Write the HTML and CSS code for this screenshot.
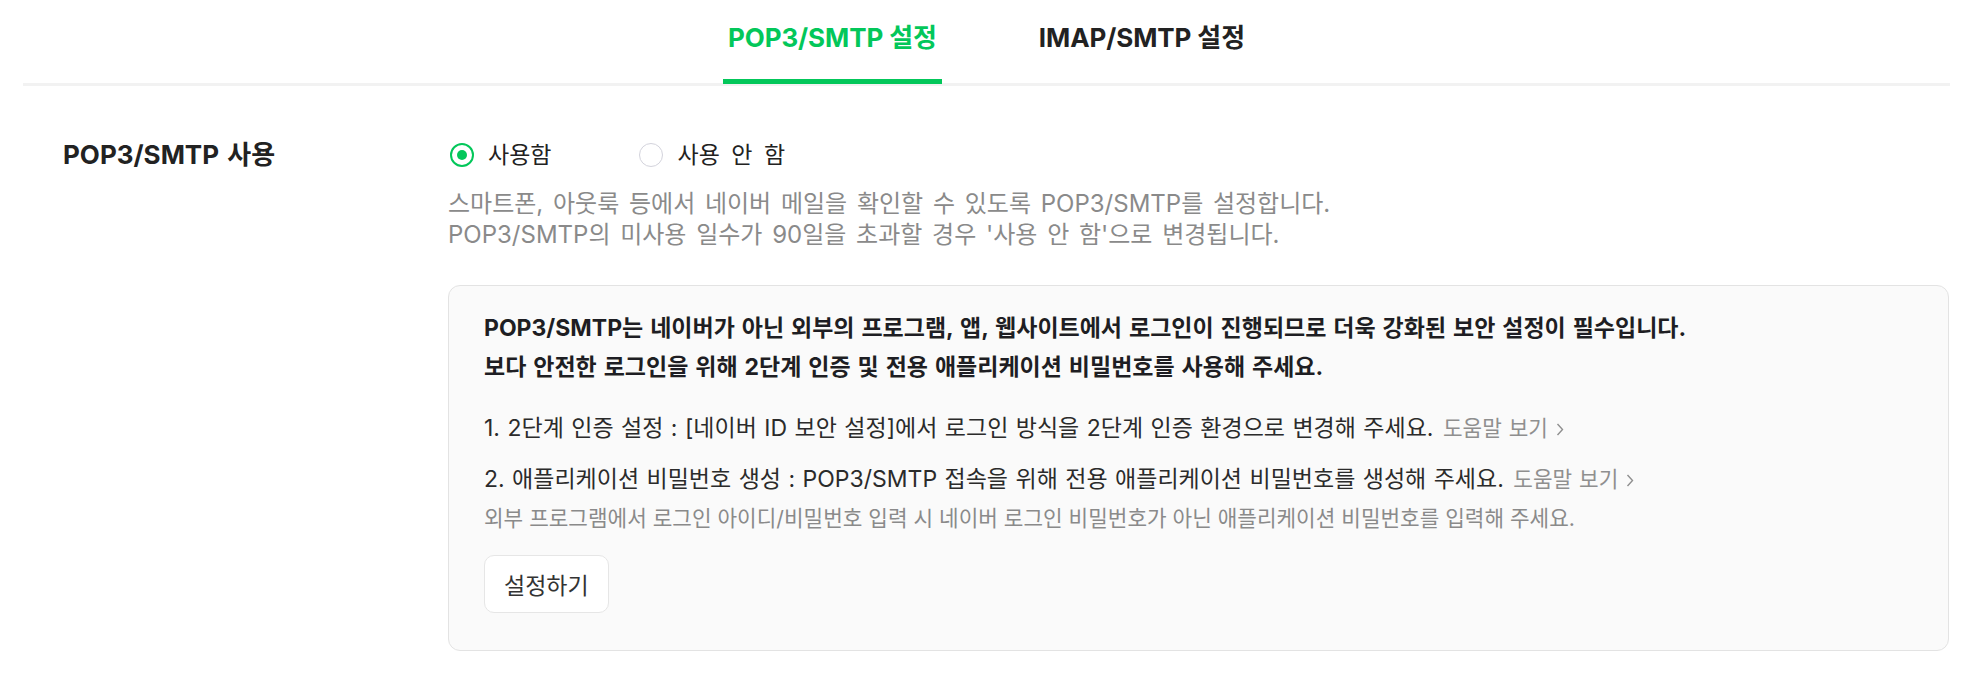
FILE: index.html
```html
<!DOCTYPE html>
<html lang="ko">
<head>
<meta charset="utf-8">
<title>POP3/SMTP 설정</title>
<link rel="stylesheet" href="styles.css">
</head>
<body>
<div class="page">
  <nav class="tabs">
    <a class="tab active">POP3/SMTP 설정</a>
    <a class="tab">IMAP/SMTP 설정</a>
  </nav>

  <section class="setting">
    <h2 class="setting-label">POP3/SMTP 사용</h2>
    <div class="setting-body">
      <div class="radios">
        <label class="radio checked"><span class="radio-dot"></span><span class="radio-text">사용함</span></label>
        <label class="radio"><span class="radio-dot"></span><span class="radio-text">사용 안 함</span></label>
      </div>
      <p class="desc">스마트폰, 아웃룩 등에서 네이버 메일을 확인할 수 있도록 POP3/SMTP를 설정합니다.<br>POP3/SMTP의 미사용 일수가 90일을 초과할 경우 '사용 안 함'으로 변경됩니다.</p>

      <div class="notice">
        <p class="notice-title">POP3/SMTP는 네이버가 아닌 외부의 프로그램, 앱, 웹사이트에서 로그인이 진행되므로 더욱 강화된 보안 설정이 필수입니다.<br>보다 안전한 로그인을 위해 2단계 인증 및 전용 애플리케이션 비밀번호를 사용해 주세요.</p>
        <ol class="steps">
          <li class="step">1. 2단계 인증 설정 : [네이버 ID 보안 설정]에서 로그인 방식을 2단계 인증 환경으로 변경해 주세요. <a class="help">도움말 보기<svg class="chev" viewBox="0 0 8 14" width="8" height="15"><polyline points="1.5,1.5 6.5,7 1.5,12.5" fill="none" stroke="#8f8f8f" stroke-width="1.4"/></svg></a></li>
          <li class="step">2. 애플리케이션 비밀번호 생성 : POP3/SMTP 접속을 위해 전용 애플리케이션 비밀번호를 생성해 주세요. <a class="help">도움말 보기<svg class="chev" viewBox="0 0 8 14" width="8" height="15"><polyline points="1.5,1.5 6.5,7 1.5,12.5" fill="none" stroke="#8f8f8f" stroke-width="1.4"/></svg></a></li>
        </ol>
        <p class="note">외부 프로그램에서 로그인 아이디/비밀번호 입력 시 네이버 로그인 비밀번호가 아닌 애플리케이션 비밀번호를 입력해 주세요.</p>
        <button class="btn" type="button">설정하기</button>
      </div>
    </div>
  </section>
</div>
</body>
</html>
```

FILE: styles.css
```css
* { box-sizing: border-box; }
html, body { margin: 0; padding: 0; background: #fff; }
body {
  font-family: "Inter", "Noto Sans CJK KR", sans-serif;
  color: #222;
}
.page {
  margin-left: 23px;
  width: 1927px;
}

/* tabs */
.tabs {
  display: flex;
  justify-content: center;
  gap: 92px;
  border-bottom: 3px solid #f2f2f2;
}
.tab {
  position: relative;
  padding: 20px 5px 27px;
  font-size: 26px;
  line-height: 36px;
  font-weight: 700;
  color: #222;
  letter-spacing: -0.1px;
}
.tab.active { color: #03c75a; }
.tab.active::after {
  content: "";
  position: absolute;
  left: 0;
  right: 0;
  bottom: -1px;
  height: 5px;
  background: #03c75a;
}

/* setting row */
.setting {
  display: grid;
  grid-template-columns: 425px 1fr;
  margin-top: 53px;
}
.setting-label {
  margin: 0;
  padding-left: 40px;
  font-size: 26px;
  line-height: 32px;
  font-weight: 700;
  color: #222;
  word-spacing: 2px;
}
.setting-body { min-width: 0; }

.radios {
  display: flex;
  align-items: center;
  gap: 86px;
  height: 32px;
}
.radio {
  display: flex;
  align-items: center;
  gap: 14px;
  font-size: 23px;
  line-height: 32px;
  color: #222;
  word-spacing: 5px;
}
.radio-dot {
  width: 24px;
  height: 24px;
  border-radius: 50%;
  border: 1.5px solid #d3d3dc;
  background: #fff;
  display: flex;
  align-items: center;
  justify-content: center;
  margin-left: 2px;
}
.radio.checked .radio-dot { border: 2px solid #03c75a; }
.radio.checked .radio-dot::before {
  content: "";
  width: 10px;
  height: 10px;
  border-radius: 50%;
  background: #03c75a;
}

.desc {
  margin: 17px 0 0;
  font-size: 24px;
  line-height: 31px;
  color: #8a8a8a;
  word-spacing: 3px;
}

/* notice box */
.notice {
  margin-top: 35px;
  width: 1501px;
  background: #fafafa;
  border: 1px solid #e3e3e3;
  border-radius: 12px;
  padding: 23px 35px 37px;
}
.notice-title {
  margin: 0;
  font-size: 23px;
  line-height: 39px;
  font-weight: 700;
  color: #1e1e23;
  word-spacing: 1.5px;
}
.steps {
  list-style: none;
  margin: 22px 0 0;
  padding: 0;
}
.step {
  font-size: 23px;
  line-height: 38px;
  color: #2b2b2b;
  word-spacing: 1px;
}
.step + .step { margin-top: 13px; }
.help {
  margin-left: 2px;
  font-size: 21.3px;
  color: #8f8f8f;
  white-space: nowrap;
  word-spacing: 1px;
}
.chev {
  margin-left: 8px;
  vertical-align: -1px;
}
.note {
  margin: 2px 0 0;
  font-size: 21.3px;
  line-height: 36px;
  color: #8a8a8a;
}
.btn {
  margin-top: 19px;
  height: 58px;
  padding: 0 19px;
  background: #fff;
  border: 1px solid #e6e6e6;
  border-radius: 10px;
  font-family: "Inter", "Noto Sans CJK KR", sans-serif;
  font-size: 23px;
  color: #333;
  cursor: pointer;
}
```
